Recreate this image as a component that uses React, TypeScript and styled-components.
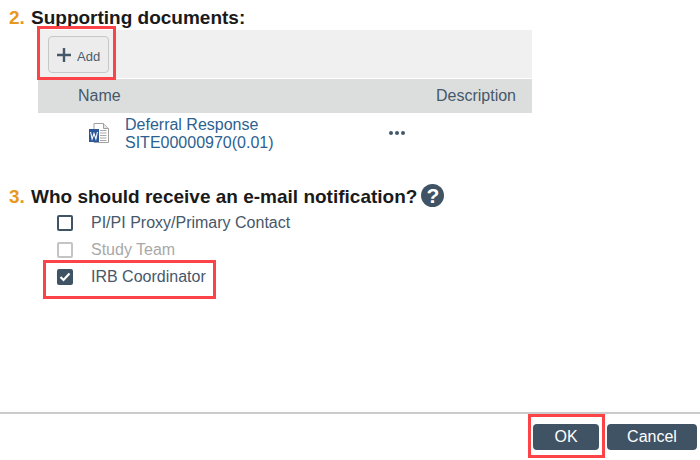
import React from "react";
import styled, { createGlobalStyle } from "styled-components";

const Global = createGlobalStyle`
  html, body { margin: 0; padding: 0; background: #fff; }
  body { font-family: "Liberation Sans", Arial, sans-serif; color: #3f5364; }
`;

const Page = styled.div`
  width: 700px;
  height: 460px;
  display: flex;
  flex-direction: column;
  overflow: hidden;
  background: #fff;
`;

const Content = styled.div`
  flex: 1;
  padding: 7px 0 0 9px;
`;

const Heading = styled.h2`
  margin: 0;
  display: flex;
  align-items: center;
  font-size: 19px;
  line-height: 21px;
  font-weight: 700;
  color: #1a1a1a;
`;

const Num = styled.span`
  color: #e8981c;
  width: 22px;
`;

const Panel = styled.div`
  width: 494px;
  margin: 2px 0 0 29px;
`;

const Toolbar = styled.div`
  height: 48px;
  background: #f0f0f0;
  display: flex;
  align-items: center;
  padding: 1px 0 0 10px;
  box-sizing: border-box;
`;

const Marked = styled.div`
  position: relative;
  display: flex;
`;

const Frame = styled.span<{ $t: number; $l: number; $r: number; $b: number }>`
  position: absolute;
  top: ${(p) => p.$t}px;
  left: ${(p) => p.$l}px;
  right: ${(p) => p.$r}px;
  bottom: ${(p) => p.$b}px;
  border: 3px solid #fb4348;
  pointer-events: none;
`;

const AddButton = styled.button`
  width: 61px;
  height: 37px;
  padding: 0 0 0 8px;
  display: flex;
  align-items: center;
  gap: 6px;
  background: #ececec;
  border: 1px solid #c6c8c8;
  border-radius: 4px;
  font: 13px "Liberation Sans", Arial, sans-serif;
  color: #4a5c6c;
`;

const AddLabel = styled.span`
  padding-top: 4px;
`;

const HeaderRow = styled.div`
  margin-top: 1px;
  height: 34px;
  background: #dcdedd;
  display: flex;
  align-items: center;
  justify-content: space-between;
  padding: 0 16px 0 40px;
  font-size: 16px;
  color: #46586a;
`;

const DocRow = styled.div`
  display: flex;
  align-items: flex-start;
  padding: 3px 0 0 51px;
`;

const DocIcon = styled.svg`
  width: 20px;
  height: 20px;
  margin-top: 7px;
`;

const DocLink = styled.a`
  margin-left: 16px;
  width: 264px;
  font-size: 16px;
  line-height: 18px;
  color: #2d5f91;
  text-decoration: none;
`;

const Dots = styled.div`
  display: flex;
  gap: 2px;
  margin-top: 15px;
`;

const Dot = styled.span`
  width: 4px;
  height: 4px;
  border-radius: 50%;
  background: #44586a;
`;

const SecondHeading = styled(Heading)`
  margin-top: 34px;
`;

const HelpIcon = styled.span`
  width: 23px;
  height: 23px;
  margin-left: 4px;
  margin-top: -3px;
  border-radius: 50%;
  background: #3f5364;
  color: #fff;
  font-size: 21px;
  font-weight: 700;
  line-height: 23px;
  text-align: center;
`;

const Options = styled.div`
  margin: 2px 0 0 48px;
  display: flex;
  flex-direction: column;
`;

const Option = styled.label<{ $disabled?: boolean }>`
  position: relative;
  height: 27px;
  display: flex;
  align-items: center;
  gap: 18px;
  font-size: 16px;
  color: ${(p) => (p.$disabled ? "#a8a8a8" : "#46586a")};
`;

const Box = styled.span<{ $checked?: boolean; $disabled?: boolean }>`
  width: 16px;
  height: 16px;
  box-sizing: border-box;
  border-radius: 2px;
  border: 2px solid ${(p) => (p.$disabled ? "#c4c4c4" : "#3f5364")};
  background: ${(p) => (p.$checked ? "#3f5364" : "#fff")};
  display: flex;
  align-items: center;
  justify-content: center;
`;

const Footer = styled.footer`
  height: 48px;
  box-sizing: border-box;
  border-top: 2px solid #cbcbcb;
  display: flex;
  justify-content: flex-end;
  align-items: flex-start;
  gap: 8px;
  padding: 10px 3px 0 0;
`;

const Action = styled.button`
  width: 66px;
  height: 26px;
  padding: 0;
  border: none;
  border-radius: 4px;
  background: #3f5364;
  color: #fff;
  font: 16px "Liberation Sans", Arial, sans-serif;
`;

const Cancel = styled(Action)`
  width: 90px;
`;

export default function App() {
  return (
    <Page>
      <Global />
      <Content>
        <Heading>
          <Num>2.</Num>Supporting documents:
        </Heading>
        <Panel>
          <Toolbar>
            <Marked>
              <AddButton>
                <svg width="14" height="14" viewBox="0 0 14 14">
                  <path d="M7 0v14M0 7h14" stroke="#44586a" strokeWidth="2.4" />
                </svg>
                <AddLabel>Add</AddLabel>
              </AddButton>
              <Frame $t={-10} $l={-11} $r={-7} $b={-7} />
            </Marked>
          </Toolbar>
          <HeaderRow>
            <span>Name</span>
            <span>Description</span>
          </HeaderRow>
          <DocRow>
            <DocIcon viewBox="0 0 20 20">
              <path d="M5 .5h9.5l5 5v14H5z" fill="#fff" stroke="#a0a0a0" />
              <path d="M14.5 .5v5h5" fill="#e6e6e6" stroke="#a0a0a0" />
              <path d="M11 7.5h6.5M11 10h6.5M11 12.5h6.5M11 15h6.5M11 17.5h6.5" stroke="#a8a8a8" />
              <rect x="0" y="6" width="10" height="13" fill="#2b579a" />
              <path d="M1.6 9l1.5 7 1.9-5.5L6.9 16l1.5-7" fill="none" stroke="#fff" strokeWidth="1.1" />
            </DocIcon>
            <DocLink href="#">
              Deferral Response
              <br />
              SITE00000970(0.01)
            </DocLink>
            <Dots>
              <Dot />
              <Dot />
              <Dot />
            </Dots>
          </DocRow>
        </Panel>
        <SecondHeading>
          <Num>3.</Num>Who should receive an e-mail notification?
          <HelpIcon>?</HelpIcon>
        </SecondHeading>
        <Options>
          <Option>
            <Box />
            PI/PI Proxy/Primary Contact
          </Option>
          <Option $disabled>
            <Box $disabled />
            Study Team
          </Option>
          <Option>
            <Box $checked>
              <svg width="12" height="10" viewBox="0 0 12 10">
                <path d="M1.5 5l3 3 6-6.5" fill="none" stroke="#fff" strokeWidth="2.2" />
              </svg>
            </Box>
            IRB Coordinator
            <Frame $t={-3} $l={-14} $r={484} $b={-9} />
          </Option>
        </Options>
      </Content>
      <Footer>
        <Marked>
          <Action>OK</Action>
          <Frame $t={-10} $l={-5} $r={-6} $b={-8} />
        </Marked>
        <Cancel>Cancel</Cancel>
      </Footer>
    </Page>
  );
}
